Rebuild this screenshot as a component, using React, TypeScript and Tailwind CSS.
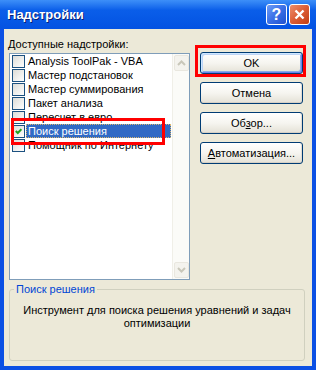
import clsx from "clsx";

// ============================================================================
// DATA
// ============================================================================

const addins = [
	{ label: "Analysis ToolPak - VBA", checked: false },
	{ label: "Мастер подстановок", checked: false },
	{ label: "Мастер суммирования", checked: false },
	{ label: "Пакет анализа", checked: false },
	{ label: "Пересчет в евро", checked: false },
	{ label: "Поиск решения", checked: true, selected: true },
	{ label: "Помощник по Интернету", checked: false },
];

// ============================================================================
// PIECES
// ============================================================================

function Checkbox({ checked }: { checked: boolean }) {
	return (
		<span className="w-[13px] h-[13px] shrink-0 border border-[#1c5180] bg-linear-to-br from-[#dcdcd7] to-white flex items-center justify-center">
			{checked && (
				<svg width="7" height="7" viewBox="0 0 7 7">
					<path d="M0.8 3 L2.8 5 L6.4 1.2" stroke="#21a121" strokeWidth="2" fill="none" />
				</svg>
			)}
		</span>
	);
}

function ScrollArrow({ up }: { up: boolean }) {
	return (
		<div className="w-[15px] h-[16px] mx-px rounded-[2px] bg-[#f4f3ee] border border-[#e9e7df] flex items-center justify-center">
			<svg width="9" height="6" viewBox="0 0 9 6">
				<path
					d={up ? "M1 5 L4.5 1.5 L8 5" : "M1 1 L4.5 4.5 L8 1"}
					stroke="#c9c7ba"
					strokeWidth="2"
					fill="none"
				/>
			</svg>
		</div>
	);
}

function XpButton({ children, isDefault }: { children: React.ReactNode; isDefault?: boolean }) {
	return (
		<button
			className={clsx(
				"h-[22px] w-[103px] rounded-[3px] border border-[#003c74] bg-linear-to-b from-white via-[#f6f5f0] to-[#e4e1d6] text-[11px] leading-[13px] text-black",
				isDefault
					? "shadow-[inset_1px_1px_0_#cee7ff,inset_-1px_-1px_0_#6982ee,inset_2px_2px_0_#bcd4f6,inset_-2px_-2px_0_#89ade4]"
					: "shadow-[inset_0_-1px_0_#d6d0c5,inset_-1px_0_0_#e2ddd2]"
			)}
		>
			{children}
		</button>
	);
}

// ============================================================================
// DIALOG
// ============================================================================

export default function App() {
	return (
		<div className="relative w-[316px] h-[370px] flex flex-col bg-[#0b50e4] font-['Liberation_Sans',Arial,sans-serif] text-black select-none">
			{/* Title bar */}
			<div className="h-[29px] shrink-0 flex items-center pl-[7px] pr-[6px] bg-linear-to-b from-[#3d8ff8] via-[#0a5ee9] via-35% to-[#0452e2]">
				<span className="flex-1 text-white font-bold text-[13px] [text-shadow:1px_1px_0_#0a1f73]">
					Надстройки
				</span>
				<div className="flex gap-[2px]">
					<div className="w-[21px] h-[21px] rounded-[3px] border border-white bg-linear-to-br from-[#6d9cf7] via-[#3a6fe6] to-[#1f50cf] flex items-center justify-center text-white font-bold text-[16px] leading-none">
						?
					</div>
					<div className="w-[21px] h-[21px] rounded-[3px] border border-white bg-linear-to-br from-[#ec8d6c] via-[#dc5c34] to-[#c23d0e] flex items-center justify-center">
						<svg width="11" height="11" viewBox="0 0 11 11">
							<path d="M1.5 1.5 L9.5 9.5 M9.5 1.5 L1.5 9.5" stroke="white" strokeWidth="2.4" />
						</svg>
					</div>
				</div>
			</div>

			{/* Body */}
			<div className="flex-1 mx-[4px] mb-[4px] bg-[#ece9d8] flex flex-col pl-[5px]">
				<div className="flex">
					{/* Add-in list */}
					<div className="flex flex-col w-[181px]">
						<div className="pt-[8px] h-[24px] -ml-px text-[11px] leading-[14px]">
							<span className="underline">Д</span>оступные надстройки:
						</div>
						<div className="h-[227px] border border-[#7f9db9] bg-white flex">
							<div className="flex-1 flex flex-col">
								{addins.map((item) => (
									<div key={item.label} className="h-[14px] flex items-center pl-[2px]">
										<Checkbox checked={item.checked} />
										<span
											className={clsx(
												"flex-1 mr-px ml-px h-[14px] pl-[1px] text-[11px] leading-[12px] whitespace-nowrap border",
												item.selected
													? "bg-[#316ac5] text-white border-dotted border-[#d8b770]"
													: "border-transparent"
											)}
										>
											{item.label}
										</span>
									</div>
								))}
							</div>
							<div className="w-[17px] bg-[#fbfbf8] border-l border-[#f0efe8] flex flex-col justify-between py-px">
								<ScrollArrow up />
								<ScrollArrow up={false} />
							</div>
						</div>
					</div>

					{/* Buttons */}
					<div className="ml-[10px] pt-[23px] flex flex-col gap-[8px]">
						<XpButton isDefault>OK</XpButton>
						<XpButton>Отмена</XpButton>
						<XpButton>
							Об<span className="underline">з</span>ор...
						</XpButton>
						<XpButton>
							<span className="underline">А</span>втоматизация...
						</XpButton>
					</div>
				</div>

				{/* Description group */}
				<fieldset className="mt-[3px] w-[296px] h-[78px] border border-[#d0d0bf] rounded-[3px]">
					<legend className="ml-[4px] px-[2px] text-[11px] leading-[13px] text-[#0046d5]">
						Поиск решения
					</legend>
					<p className="pt-[8px] px-[8px] text-center text-[11px] leading-[13px]">
						Инструмент для поиска решения уравнений и задач оптимизации
					</p>
				</fieldset>
			</div>

			{/* Red highlight annotations */}
			<div className="absolute left-[11px] top-[118px] w-[154px] h-[27px] border-[3px] border-[#ff0000]" />
			<div className="absolute left-[195px] top-[45px] w-[111px] h-[32px] border-[3px] border-[#ff0000]" />
		</div>
	);
}
